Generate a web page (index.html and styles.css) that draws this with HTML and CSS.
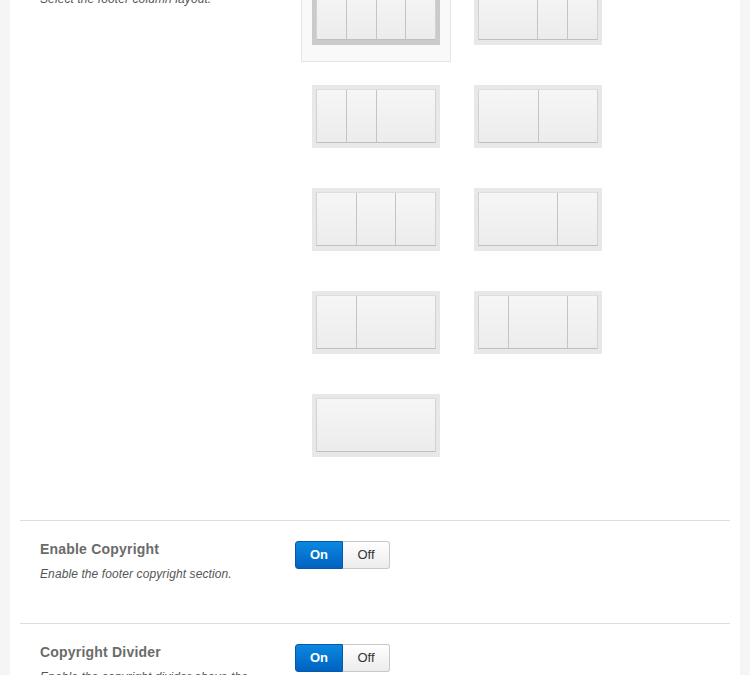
FILE: index.html
```html
<!DOCTYPE html>
<html>
<head>
<meta charset="utf-8">
<link rel="stylesheet" href="styles.css">
</head>
<body>
<div class="panel">
  <section class="option option-layout">
    <div class="info">
      <h3 class="title">Footer Columns</h3>
      <p class="desc">Select the footer column layout.</p>
    </div>
    <div class="control">
      <div class="layouts">
        <div class="cell selected"><div class="tile"><div class="inner"><span class="c" style="flex:1"></span><span class="c" style="flex:1"></span><span class="c" style="flex:1"></span><span class="c" style="flex:1"></span></div></div></div>
        <div class="cell"><div class="tile"><div class="inner"><span class="c" style="flex:2"></span><span class="c" style="flex:1"></span><span class="c" style="flex:1"></span></div></div></div>
        <div class="cell"><div class="tile"><div class="inner"><span class="c" style="flex:1"></span><span class="c" style="flex:1"></span><span class="c" style="flex:2"></span></div></div></div>
        <div class="cell"><div class="tile"><div class="inner"><span class="c" style="flex:1"></span><span class="c" style="flex:1"></span></div></div></div>
        <div class="cell"><div class="tile"><div class="inner"><span class="c" style="flex:1"></span><span class="c" style="flex:1"></span><span class="c" style="flex:1"></span></div></div></div>
        <div class="cell"><div class="tile"><div class="inner"><span class="c" style="flex:2"></span><span class="c" style="flex:1"></span></div></div></div>
        <div class="cell"><div class="tile"><div class="inner"><span class="c" style="flex:1"></span><span class="c" style="flex:2"></span></div></div></div>
        <div class="cell"><div class="tile"><div class="inner"><span class="c" style="flex:1"></span><span class="c" style="flex:2"></span><span class="c" style="flex:1"></span></div></div></div>
        <div class="cell"><div class="tile"><div class="inner"><span class="c" style="flex:1"></span></div></div></div>
      </div>
    </div>
  </section>
  <section class="option">
    <div class="info">
      <h3 class="title">Enable Copyright</h3>
      <p class="desc">Enable the footer copyright section.</p>
    </div>
    <div class="control">
      <div class="toggle"><span class="btn on">On</span><span class="btn off">Off</span></div>
    </div>
  </section>
  <section class="option">
    <div class="info">
      <h3 class="title">Copyright Divider</h3>
      <p class="desc">Enable the copyright divider above the copyright.</p>
    </div>
    <div class="control">
      <div class="toggle"><span class="btn on">On</span><span class="btn off">Off</span></div>
    </div>
  </section>
</div>
</body>
</html>
```
FILE: styles.css
```css
html, body {
  margin: 0;
  padding: 0;
  background: #f5f5f5;
  font-family: "Liberation Sans", Arial, sans-serif;
  height: 675px;
  overflow: hidden;
}
.panel {
  margin: 0 10px;
  background: #fff;
  padding: 0 10px;
  min-height: 800px;
}
.option {
  display: flex;
  border-top: 1px solid #dedede;
  padding: 19px 20px 40px;
}
.option-layout {
  margin-top: -55px;
  border-top-color: transparent;
  padding-bottom: 46px;
}
.info {
  width: 255px;
  flex: none;
}
.title {
  margin: 0;
  font-size: 14px;
  line-height: 18px;
  font-weight: bold;
  letter-spacing: 0.2px;
  color: #6b6b6b;
}
.desc {
  margin: 7px 0 0;
  font-size: 12px;
  line-height: 18px;
  font-style: italic;
  letter-spacing: 0.1px;
  color: #555;
}
.control {
  flex: 1;
}
.layouts {
  margin: 6px 0 0 6px;
  display: grid;
  grid-template-columns: 150px 150px;
  column-gap: 12px;
  row-gap: 12px;
}
.cell {
  border: 1px solid transparent;
  padding: 10px 10px 16px;
}
.cell.selected {
  background: #f9f9f9;
  border-color: #e6e6e6;
}
.tile {
  width: 128px;
  height: 63px;
  box-sizing: border-box;
  background: #e8e8e8;
  padding: 4px 4px 5px;
}
.selected .tile {
  background: #cacaca;
}
.inner {
  display: flex;
  height: 54px;
  box-sizing: border-box;
  border: 1px solid #d2d2d2;
  border-top-color: #dedede;
  border-bottom-color: #bfbfbf;
  background: linear-gradient(#f6f6f6, #ececec);
}
.c {
  display: block;
  min-width: 0;
}
.c + .c {
  border-left: 1px solid #c4c4c4;
}
.toggle {
  margin-top: 1px;
  display: flex;
  width: 95px;
  height: 28px;
}
.btn {
  flex: 1;
  box-sizing: border-box;
  height: 28px;
  font-size: 13px;
  line-height: 26px;
  text-align: center;
}
.on {
  color: #fff;
  font-weight: bold;
  background: linear-gradient(#0b88e0, #0062c0);
  border: 1px solid #0558aa;
  border-radius: 3px 0 0 3px;
}
.off {
  color: #333;
  background: linear-gradient(#ffffff, #ececec);
  border: 1px solid #c8c8c8;
  border-left: none;
  border-radius: 0 3px 3px 0;
}
```
